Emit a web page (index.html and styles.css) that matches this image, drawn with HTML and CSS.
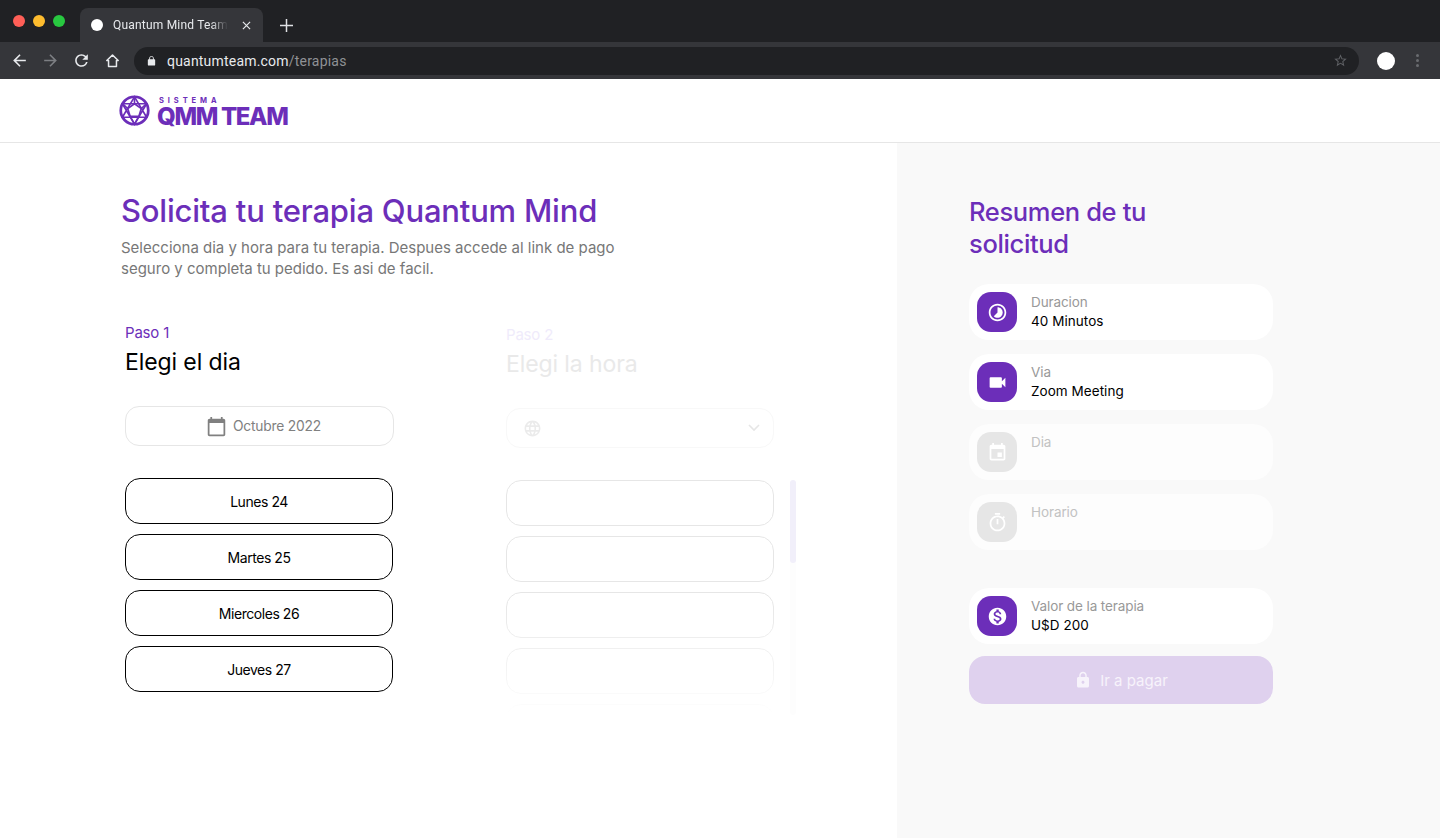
FILE: index.html
```html
<!DOCTYPE html>
<html lang="es">
<head>
    <meta charset="UTF-8">
    <meta name="viewport" content="width=device-width, initial-scale=1.0">
    <title>Quantum Mind Team</title>
    <link rel="stylesheet" href="styles.css">
</head>
<body>
    <!-- browser window -->
    <div class="tabstrip">
        <div class="lights">
            <span class="light light-red"></span>
            <span class="light light-yellow"></span>
            <span class="light light-green"></span>
        </div>
        <div class="tab">
            <span class="favicon"></span>
            <span class="tab-title">Quantum Mind Team</span>
            <svg class="tab-close" viewBox="0 0 10 10"><path d="M1 1l8 8M9 1l-8 8"/></svg>
        </div>
        <svg class="new-tab" viewBox="0 0 14 14"><path d="M7 0v14M0 7h14"/></svg>
    </div>
    <div class="toolbar">
        <svg class="tool" viewBox="0 0 24 24"><path d="M20 11H7.83l5.59-5.59L12 4l-8 8 8 8 1.41-1.41L7.83 13H20v-2z"/></svg>
        <svg class="tool tool-off" viewBox="0 0 24 24"><path d="M4 11h12.17l-5.59-5.59L12 4l8 8-8 8-1.41-1.41L16.17 13H4v-2z"/></svg>
        <svg class="tool" viewBox="0 0 24 24"><path d="M17.65 6.35A7.958 7.958 0 0 0 12 4c-4.42 0-7.99 3.58-7.99 8s3.57 8 7.99 8c3.73 0 6.84-2.55 7.73-6h-2.08A5.99 5.99 0 0 1 12 18c-3.31 0-6-2.69-6-6s2.69-6 6-6c1.66 0 3.14.69 4.22 1.78L13 11h7V4l-2.35 2.35z"/></svg>
        <svg class="tool tool-home" viewBox="0 0 24 24"><path d="M12 5 4.8 12H7V19.5H17V12H19.2Z"/></svg>
        <div class="omnibox">
            <svg class="omni-lock" viewBox="0 0 24 24"><path d="M18 8h-1V6c0-2.76-2.24-5-5-5S7 3.24 7 6v2H6c-1.1 0-2 .9-2 2v10c0 1.1.9 2 2 2h12c1.1 0 2-.9 2-2V10c0-1.1-.9-2-2-2zm-2.9 0H8.9V6c0-1.71 1.39-3.1 3.1-3.1 1.71 0 3.1 1.39 3.1 3.1v2z"/></svg>
            <span class="url">quantumteam.com<span class="url-path">/terapias</span></span>
            <svg class="omni-star" viewBox="0 0 24 24"><path d="M22 9.24l-7.19-.62L12 2 9.19 8.63 2 9.24l5.46 4.73L5.82 21 12 17.27 18.18 21l-1.63-7.03L22 9.24zM12 15.4l-3.76 2.27 1-4.28-3.32-2.88 4.38-.38L12 6.1l1.71 4.04 4.38.38-3.32 2.88 1 4.28L12 15.4z"/></svg>
        </div>
        <span class="avatar"></span>
        <span class="kebab"><i></i><i></i><i></i></span>
    </div>

    <!-- page -->
    <header class="site-header">
        <svg class="logo-mark" viewBox="0 0 32 32">
            <circle class="logo-ring" cx="16" cy="16" r="14.2"/>
            <path d="M16 2 L28.5 23 H3.5 Z M16 30 L3.5 9 H28.5 Z"/>
            <path d="M16 9 L23 14 L20.5 22 H11.5 L9 14 Z M16 2V9 M3.5 9L9 14 M28.5 9L23 14 M11.5 22L16 30L20.5 22"/>
        </svg>
        <div class="logo-text">
            <span class="logo-small">SISTEMA</span>
            <span class="logo-big">QMM TEAM</span>
        </div>
    </header>

    <main class="layout">
        <section class="form-side">
            <h1 class="page-title">Solicita tu terapia Quantum Mind</h1>
            <p class="page-lead">Selecciona dia y hora para tu terapia. Despues accede al link de pago<br>seguro y completa tu pedido. Es asi de facil.</p>

            <div class="steps">
                <div class="step">
                    <div class="step-num">Paso 1</div>
                    <h2 class="step-title">Elegi el dia</h2>
                    <div class="combo combo-month">
                        <svg class="combo-icon" viewBox="0 0 24 24"><path d="M20 3h-1V1h-2v2H7V1H5v2H4c-1.1 0-2 .9-2 2v16c0 1.1.9 2 2 2h16c1.1 0 2-.9 2-2V5c0-1.1-.9-2-2-2zm0 18H4V8h16v13z"/></svg>
                        <span>Octubre 2022</span>
                    </div>
                    <div class="day-list">
                        <button class="day">Lunes 24</button>
                        <button class="day">Martes 25</button>
                        <button class="day">Miercoles 26</button>
                        <button class="day">Jueves 27</button>
                    </div>
                </div>

                <div class="step step-off">
                    <div class="step-num">Paso 2</div>
                    <h2 class="step-title">Elegi la hora</h2>
                    <div class="combo combo-zone">
                        <svg class="combo-icon" viewBox="0 0 24 24"><path d="M11.99 2C6.47 2 2 6.48 2 12s4.47 10 9.99 10C17.52 22 22 17.52 22 12S17.52 2 11.99 2zm6.93 6h-2.95c-.32-1.25-.78-2.45-1.38-3.56 1.84.63 3.37 1.91 4.33 3.56zM12 4.04c.83 1.2 1.48 2.53 1.91 3.96h-3.82c.43-1.43 1.08-2.76 1.91-3.96zM4.26 14C4.1 13.36 4 12.69 4 12s.1-1.36.26-2h3.38c-.08.66-.14 1.32-.14 2 0 .68.06 1.34.14 2H4.26zm.82 2h2.95c.32 1.25.78 2.45 1.38 3.56-1.84-.63-3.37-1.9-4.33-3.56zm2.95-8H5.08c.96-1.66 2.49-2.93 4.33-3.56C8.81 5.55 8.35 6.75 8.03 8zM12 19.96c-.83-1.2-1.48-2.53-1.91-3.96h3.82c-.43 1.43-1.08 2.76-1.91 3.96zM14.34 14H9.66c-.09-.66-.16-1.32-.16-2 0-.68.07-1.35.16-2h4.68c.09.65.16 1.32.16 2 0 .68-.07 1.34-.16 2zm.25 5.56c.6-1.11 1.06-2.31 1.38-3.56h2.95c-.96 1.65-2.49 2.93-4.33 3.56zM16.36 14c.08-.66.14-1.32.14-2 0-.68-.06-1.34-.14-2h3.38c.16.64.26 1.31.26 2s-.1 1.36-.26 2h-3.38z"/></svg>
                        <svg class="combo-chevron" viewBox="0 0 12 8"><path d="M1 1l5 5 5-5"/></svg>
                    </div>
                    <div class="hour-wrap">
                        <div class="hour-list">
                            <div class="hour"></div>
                            <div class="hour"></div>
                            <div class="hour"></div>
                            <div class="hour"></div>
                            <div class="hour"></div>
                        </div>
                        <div class="scroll-track"><div class="scroll-thumb"></div></div>
                    </div>
                </div>
            </div>
        </section>

        <aside class="summary">
            <h2 class="summary-title">Resumen de tu<br>solicitud</h2>
            <div class="cards">
                <div class="card">
                    <div class="card-icon">
                        <svg viewBox="0 0 24 24"><path d="M16.24 7.76C15.07 6.59 13.54 6 12 6v6l-4.24 4.24c2.34 2.34 6.14 2.34 8.49 0 2.34-2.34 2.34-6.14-.01-8.48zM12 2C6.48 2 2 6.48 2 12s4.48 10 10 10 10-4.48 10-10S17.52 2 12 2zm0 18c-4.42 0-8-3.58-8-8s3.58-8 8-8 8 3.58 8 8-3.58 8-8 8z"/></svg>
                    </div>
                    <div class="card-text">
                        <span class="card-label">Duracion</span>
                        <span class="card-value">40 Minutos</span>
                    </div>
                </div>
                <div class="card">
                    <div class="card-icon">
                        <svg viewBox="0 0 24 24"><path d="M17 10.5V7c0-.55-.45-1-1-1H4c-.55 0-1 .45-1 1v10c0 .55.45 1 1 1h12c.55 0 1-.45 1-1v-3.5l4 4v-11l-4 4z"/></svg>
                    </div>
                    <div class="card-text">
                        <span class="card-label">Via</span>
                        <span class="card-value">Zoom Meeting</span>
                    </div>
                </div>
                <div class="card card-off">
                    <div class="card-icon">
                        <svg viewBox="0 0 24 24"><path d="M17 12h-5v5h5v-5zM16 1v2H8V1H6v2H5c-1.11 0-1.99.9-1.99 2L3 19c0 1.1.89 2 2 2h14c1.1 0 2-.9 2-2V5c0-1.1-.9-2-2-2h-1V1h-2zm3 18H5V8h14v11z"/></svg>
                    </div>
                    <div class="card-text">
                        <span class="card-label">Dia</span>
                    </div>
                </div>
                <div class="card card-off">
                    <div class="card-icon">
                        <svg viewBox="0 0 24 24"><path d="M15 1H9v2h6V1zm-4 13h2V8h-2v6zm8.03-6.61l1.42-1.42c-.43-.51-.9-.99-1.41-1.41l-1.42 1.42C16.07 4.74 14.12 4 12 4c-4.97 0-9 4.03-9 9s4.02 9 9 9 9-4.03 9-9c0-2.12-.74-4.07-1.97-5.61zM12 20c-3.87 0-7-3.13-7-7s3.13-7 7-7 7 3.13 7 7-3.13 7-7 7z"/></svg>
                    </div>
                    <div class="card-text">
                        <span class="card-label">Horario</span>
                    </div>
                </div>
            </div>
            <div class="card card-price">
                <div class="card-icon">
                    <svg viewBox="0 0 24 24"><path d="M12 2C6.48 2 2 6.48 2 12s4.48 10 10 10 10-4.48 10-10S17.52 2 12 2zm1.41 16.09V20h-2.67v-1.93c-1.71-.36-3.16-1.46-3.27-3.4h1.96c.1 1.05.82 1.87 2.65 1.87 1.96 0 2.4-.98 2.4-1.59 0-.83-.44-1.61-2.67-2.14-2.48-.6-4.18-1.62-4.18-3.67 0-1.72 1.39-2.84 3.11-3.21V4h2.67v1.95c1.86.45 2.79 1.86 2.85 3.39H14.3c-.05-1.11-.64-1.87-2.22-1.87-1.5 0-2.4.68-2.4 1.65 0 .85.65 1.4 2.67 1.93s4.18 1.39 4.18 3.91c-.01 1.83-1.38 2.84-3.12 3.13z"/></svg>
                </div>
                <div class="card-text">
                    <span class="card-label">Valor de la terapia</span>
                    <span class="card-value">U$D 200</span>
                </div>
            </div>
            <button class="pay">
                <svg viewBox="0 0 24 24"><path d="M18 8h-1V6c0-2.76-2.24-5-5-5S7 3.24 7 6v2H6c-1.1 0-2 .9-2 2v10c0 1.1.9 2 2 2h12c1.1 0 2-.9 2-2V10c0-1.1-.9-2-2-2zm-6 9c-1.1 0-2-.9-2-2s.9-2 2-2 2 .9 2 2-.9 2-2 2zm3.1-9H8.9V6c0-1.71 1.39-3.1 3.1-3.1 1.71 0 3.1 1.39 3.1 3.1v2z"/></svg>
                Ir a pagar
            </button>
        </aside>
    </main>
</body>
</html>
```

FILE: styles.css
```css
* {
    box-sizing: border-box;
}

html, body {
    height: 100%;
}

body {
    margin: 0;
    display: flex;
    flex-direction: column;
    height: 838px;
    overflow: hidden;
    background: #fff;
    font-family: Inter, "Noto Sans", sans-serif;
    color: #000;
}

/* browser chrome */
.tabstrip {
    height: 42px;
    background: #202124;
    display: flex;
    align-items: flex-end;
    flex-shrink: 0;
}

.lights {
    display: flex;
    gap: 8px;
    padding: 0 0 15px 13px;
    width: 80px;
}

.light {
    width: 12px;
    height: 12px;
    border-radius: 50%;
}

.light-red { background: #ff5f57; }
.light-yellow { background: #febc2e; }
.light-green { background: #28c840; }

.tab {
    width: 183px;
    height: 34px;
    background: #35363a;
    border-radius: 8px 8px 0 0;
    display: flex;
    align-items: center;
    padding: 0 12px 0 11px;
}

.favicon {
    width: 12px;
    height: 12px;
    border-radius: 50%;
    background: #fff;
    flex-shrink: 0;
}

.tab-title {
    font-family: Roboto, sans-serif;
    font-size: 12px;
    letter-spacing: 0.2px;
    color: #e8eaed;
    margin-left: 10px;
    width: 115px;
    white-space: nowrap;
    overflow: hidden;
    -webkit-mask-image: linear-gradient(to right, #000 85%, transparent);
    mask-image: linear-gradient(to right, #000 85%, transparent);
}

.tab-close {
    width: 9px;
    height: 9px;
    margin-left: auto;
    fill: none;
    stroke: #e8eaed;
    stroke-width: 1.3;
}

.new-tab {
    width: 13px;
    height: 13px;
    margin: 0 0 10px 17px;
    fill: none;
    stroke: #e0e2e5;
    stroke-width: 1.6;
}

.toolbar {
    height: 37px;
    background: #35363a;
    display: flex;
    align-items: center;
    padding-left: 10px;
    flex-shrink: 0;
}

.tool {
    width: 19px;
    height: 19px;
    fill: #e8eaed;
    margin-right: 12px;
    flex-shrink: 0;
}

.tool-off {
    fill: #7d7f83;
}

.tool-home {
    fill: none;
    stroke: #e8eaed;
    stroke-width: 1.9;
    stroke-linejoin: round;
    margin-right: 12px;
}

.omnibox {
    width: 1225px;
    height: 28px;
    border-radius: 14px;
    background: #202124;
    display: flex;
    align-items: center;
    padding: 0 11px 0 12px;
}

.omni-lock {
    width: 11px;
    height: 12px;
    fill: #e8eaed;
}

.url {
    font-family: Roboto, sans-serif;
    font-size: 14px;
    letter-spacing: 0.2px;
    color: #e8eaed;
    margin-left: 10px;
}

.url-path {
    color: #8f9195;
}

.omni-star {
    width: 15px;
    height: 15px;
    fill: #5f6165;
    margin-left: auto;
}

.avatar {
    width: 18px;
    height: 18px;
    border-radius: 50%;
    background: #fff;
    margin-left: 18px;
}

.kebab {
    display: flex;
    flex-direction: column;
    gap: 2px;
    margin-left: 21px;
}

.kebab i {
    display: block;
    width: 3px;
    height: 3px;
    border-radius: 50%;
    background: #6a6c70;
}

/* header */
.site-header {
    height: 64px;
    border-bottom: 1px solid #e6e6e6;
    display: flex;
    align-items: center;
    padding: 0 0 0 118.5px;
    flex-shrink: 0;
}

.logo-mark {
    width: 31px;
    height: 31px;
    fill: none;
    stroke: #6c2eb9;
    stroke-width: 1.7;
}

.logo-ring {
    stroke-width: 2.8;
}

.logo-text {
    display: flex;
    flex-direction: column;
    gap: 3px;
    margin-left: 7.5px;
    color: #6c2eb9;
}

.logo-small {
    font-size: 7.5px;
    line-height: 9px;
    font-weight: 700;
    letter-spacing: 3.9px;
    padding-left: 2px;
}

.logo-big {
    font-size: 24px;
    line-height: 18px;
    font-weight: 800;
    letter-spacing: -1.35px;
    white-space: nowrap;
}

/* main layout */
.layout {
    flex: 1;
    display: grid;
    grid-template-columns: 897px 1fr;
    min-height: 0;
}

.form-side {
    padding: 48px 0 0 121px;
}

.page-title {
    margin: 0;
    font-size: 31px;
    line-height: 40px;
    font-weight: 500;
    letter-spacing: -0.2px;
    color: #6c2eb9;
}

.page-lead {
    margin: 6px 0 0;
    font-size: 15px;
    line-height: 21px;
    font-weight: 400;
    color: #777;
}

.steps {
    display: grid;
    grid-template-columns: 268px 1fr;
    column-gap: 113px;
    margin: 44px 0 0 4px;
}

.step-num {
    font-size: 15px;
    line-height: 20px;
    letter-spacing: -0.2px;
    color: #6c2eb9;
}

.step-title {
    margin: 3px 0 0;
    font-size: 23px;
    line-height: 32px;
    font-weight: 400;
    letter-spacing: -0.1px;
}

.combo {
    height: 40px;
    margin-top: 28px;
    border: 1px solid #e6e6e6;
    border-radius: 14px;
    display: flex;
    align-items: center;
    font-size: 14px;
    color: #808080;
}

.combo-month {
    width: 269px;
    justify-content: center;
    padding-left: 8px;
}

.combo-month span {
    margin-left: 6px;
    font-size: 13.8px;
    letter-spacing: -0.2px;
}

.combo-icon {
    width: 21px;
    height: 21px;
    fill: #808080;
}

.day-list {
    display: flex;
    flex-direction: column;
    gap: 10px;
    margin-top: 32px;
}

.day {
    height: 46px;
    border: 1px solid #000;
    border-radius: 15px;
    background: #fff;
    color: #000;
    font-family: inherit;
    font-size: 14px;
    letter-spacing: -0.45px;
    padding: 0;
}

/* step 2, still locked */
.step-off {
    margin-top: 2px;
}

.step-off .step-num {
    color: #efebfb;
}

.step-off .step-title {
    color: #e9e9e9;
}

.combo-zone {
    width: 268px;
    border-color: #f8f8f8;
    padding: 0 13px 0 16px;
}

.combo-zone .combo-icon {
    width: 19px;
    height: 19px;
    fill: #ebebeb;
}

.combo-chevron {
    width: 12px;
    height: 8px;
    margin-left: auto;
    fill: none;
    stroke: #e6e6e6;
    stroke-width: 1.6;
}

.hour-wrap {
    display: flex;
    gap: 16px;
    height: 235px;
    margin-top: 32px;
}

.hour-list {
    width: 268px;
    overflow: hidden;
    display: flex;
    flex-direction: column;
    gap: 10px;
    -webkit-mask-image: linear-gradient(to bottom, #000 50%, rgba(0, 0, 0, 0.35) 85%, transparent);
    mask-image: linear-gradient(to bottom, #000 50%, rgba(0, 0, 0, 0.35) 85%, transparent);
}

.hour {
    height: 46px;
    flex-shrink: 0;
    border: 1px solid #e6e6e6;
    border-radius: 15px;
}

.scroll-track {
    width: 6px;
    background: #fdfdfd;
    border-radius: 3px;
}

.scroll-thumb {
    height: 83px;
    background: #f1effa;
    border-radius: 3px;
}

/* summary panel */
.summary {
    background: #f9f9f9;
    padding: 53px 0 0 72px;
}

.summary-title {
    margin: 0;
    font-size: 25.5px;
    line-height: 32px;
    font-weight: 500;
    letter-spacing: -0.35px;
    color: #6c2eb9;
}

.cards {
    display: flex;
    flex-direction: column;
    gap: 14px;
    margin-top: 24px;
}

.card {
    width: 304px;
    height: 56px;
    background: #fff;
    border-radius: 20px;
    display: flex;
    align-items: center;
    padding-left: 8px;
}

.card-icon {
    width: 40px;
    height: 40px;
    border-radius: 14px;
    background: #6c2eb9;
    display: flex;
    align-items: center;
    justify-content: center;
    flex-shrink: 0;
}

.card-icon svg {
    width: 21px;
    height: 21px;
    fill: #fff;
}

.card-text {
    display: flex;
    flex-direction: column;
    align-self: flex-start;
    padding-top: 9px;
    margin-left: 14px;
    font-size: 13.5px;
    line-height: 19px;
}

.card-label {
    color: #999;
    letter-spacing: -0.1px;
}

.card-value {
    color: #000;
    letter-spacing: 0.05px;
}

.card-off {
    background: #fdfdfd;
}

.card-off .card-icon {
    background: #e6e6e6;
}

.card-off .card-label {
    color: #c2c2c2;
}

.card-price {
    margin-top: 38px;
}

.pay {
    width: 304px;
    height: 48px;
    margin-top: 12px;
    border: none;
    border-radius: 16px;
    background: #dfd1ee;
    color: #f7f3fb;
    font-family: inherit;
    font-size: 15px;
    display: flex;
    align-items: center;
    justify-content: center;
    gap: 8px;
    padding: 0;
}

.pay svg {
    width: 18px;
    height: 18px;
    fill: #f7f3fb;
}
```
